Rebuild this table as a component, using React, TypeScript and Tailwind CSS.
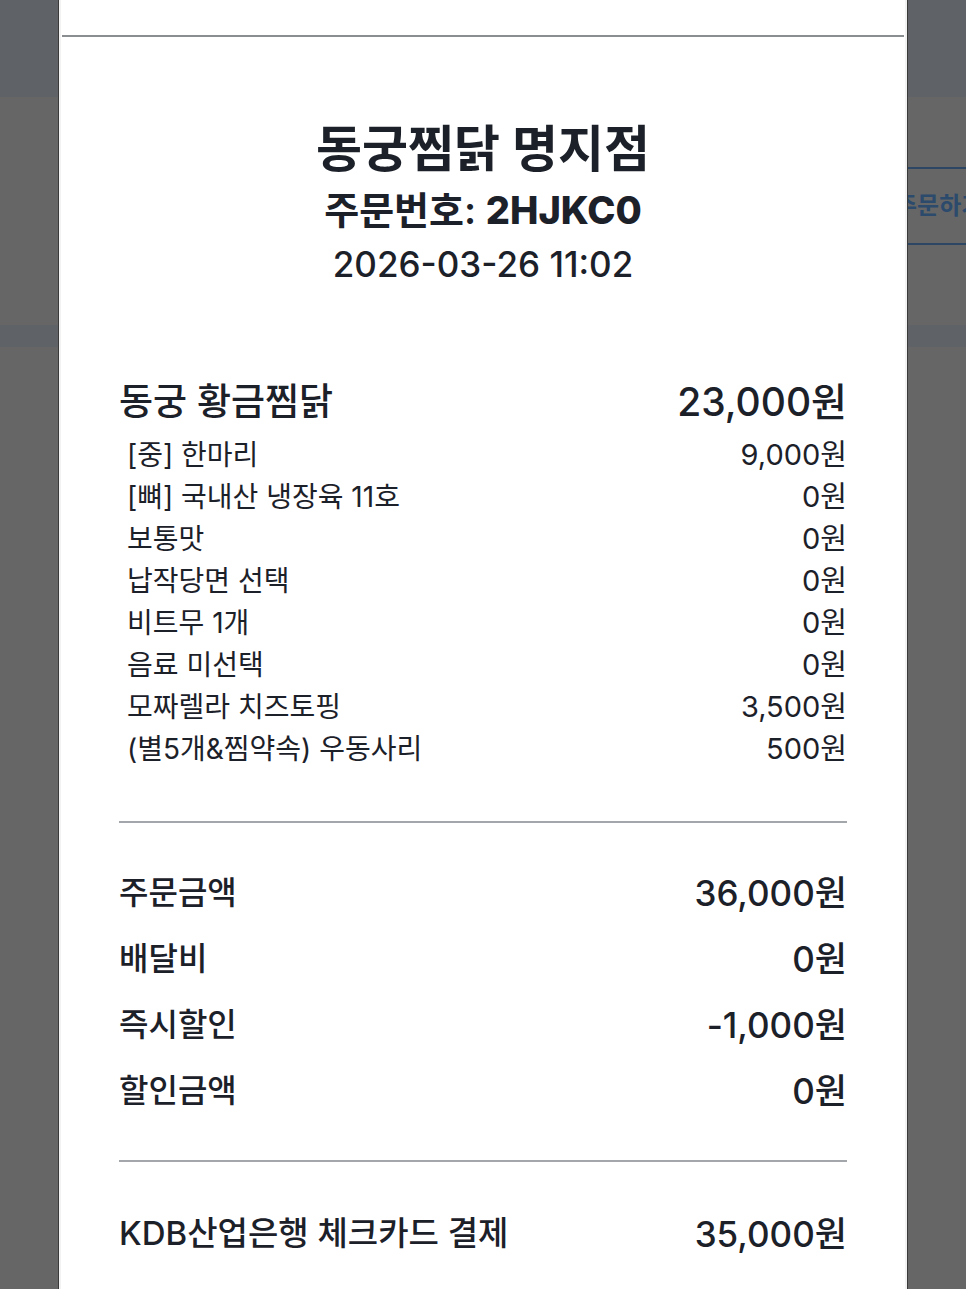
import React from "react";

const font = { fontFamily: 'Inter, "Noto Sans CJK KR", sans-serif' };

const options = [
  { name: "[중] 한마리", price: "9,000원" },
  { name: "[뼈] 국내산 냉장육 11호", price: "0원" },
  { name: "보통맛", price: "0원" },
  { name: "납작당면 선택", price: "0원" },
  { name: "비트무 1개", price: "0원" },
  { name: "음료 미선택", price: "0원" },
  { name: "모짜렐라 치즈토핑", price: "3,500원" },
  { name: "(별5개&찜약속) 우동사리", price: "500원" },
];

const summary = [
  { label: "주문금액", value: "36,000원" },
  { label: "배달비", value: "0원" },
  { label: "즉시할인", value: "-1,000원" },
  { label: "할인금액", value: "0원" },
];

export default function App() {
  return (
    <div className="relative w-[966px] h-[1289px] overflow-hidden bg-[#666666]" style={font}>
      {/* page behind the dimmed overlay */}
      <div className="h-[97px] bg-[#5f6266]" />
      <div className="h-[70px]" />
      <div className="flex justify-end">
        <div className="w-[80px] h-[78px] border-y-2 border-[#2c4664] flex items-center pl-[9px] overflow-hidden">
          <span className="text-[24px] font-bold text-[#2c4a6c] whitespace-nowrap">주문하기</span>
        </div>
      </div>
      <div className="h-[80px]" />
      <div className="h-[22px] bg-[#5f6266]" />

      {/* receipt modal */}
      <div className="absolute top-0 left-[58px] w-[850px] h-full bg-white border-l border-r border-[#3a3a3a] text-[#1c2129]">
        <div className="h-full border-x-2 border-[#f2f2f2]">
          <div className="h-[35px]" />
          <div className="mx-[1px] h-[2px] bg-[#8b8e91]" />

          <div className="mt-[81px] flex flex-col items-center">
            <h1 className="text-[50px] leading-[62px] font-bold">동궁찜닭 명지점</h1>
            <div className="mt-[8px] text-[38px] leading-[44px] font-semibold">
              주문번호: <span className="font-extrabold">2HJKC0</span>
            </div>
            <div className="mt-[12px] text-[35px] leading-[40px] font-medium">2026-03-26 11:02</div>
          </div>

          <div className="mx-[58px] mt-[94px]">
            <div className="flex justify-between items-center h-[48px]">
              <span className="text-[37px] font-medium">동궁 황금찜닭</span>
              <span className="text-[39px] font-medium">23,000원</span>
            </div>
            <div className="mt-[8px] pl-[8px]">
              {options.map((o) => (
                <div key={o.name} className="flex justify-between items-center h-[42px]">
                  <span className="text-[28px]">{o.name}</span>
                  <span className="text-[29px]">{o.price}</span>
                </div>
              ))}
            </div>

            <div className="mt-[51px] h-[2px] bg-[#a3a7ab]" />

            <div className="mt-[37px]">
              {summary.map((s) => (
                <div key={s.label} className="flex justify-between items-center h-[66px] font-medium">
                  <span className="text-[32px]">{s.label}</span>
                  <span className="text-[35px]">{s.value}</span>
                </div>
              ))}
            </div>

            <div className="mt-[36px] h-[2px] bg-[#a3a7ab]" />

            <div className="mt-[39px] flex justify-between items-center h-[66px] font-medium">
              <span className="text-[33px]">KDB산업은행 체크카드 결제</span>
              <span className="text-[35px]">35,000원</span>
            </div>
          </div>
        </div>
      </div>
    </div>
  );
}
